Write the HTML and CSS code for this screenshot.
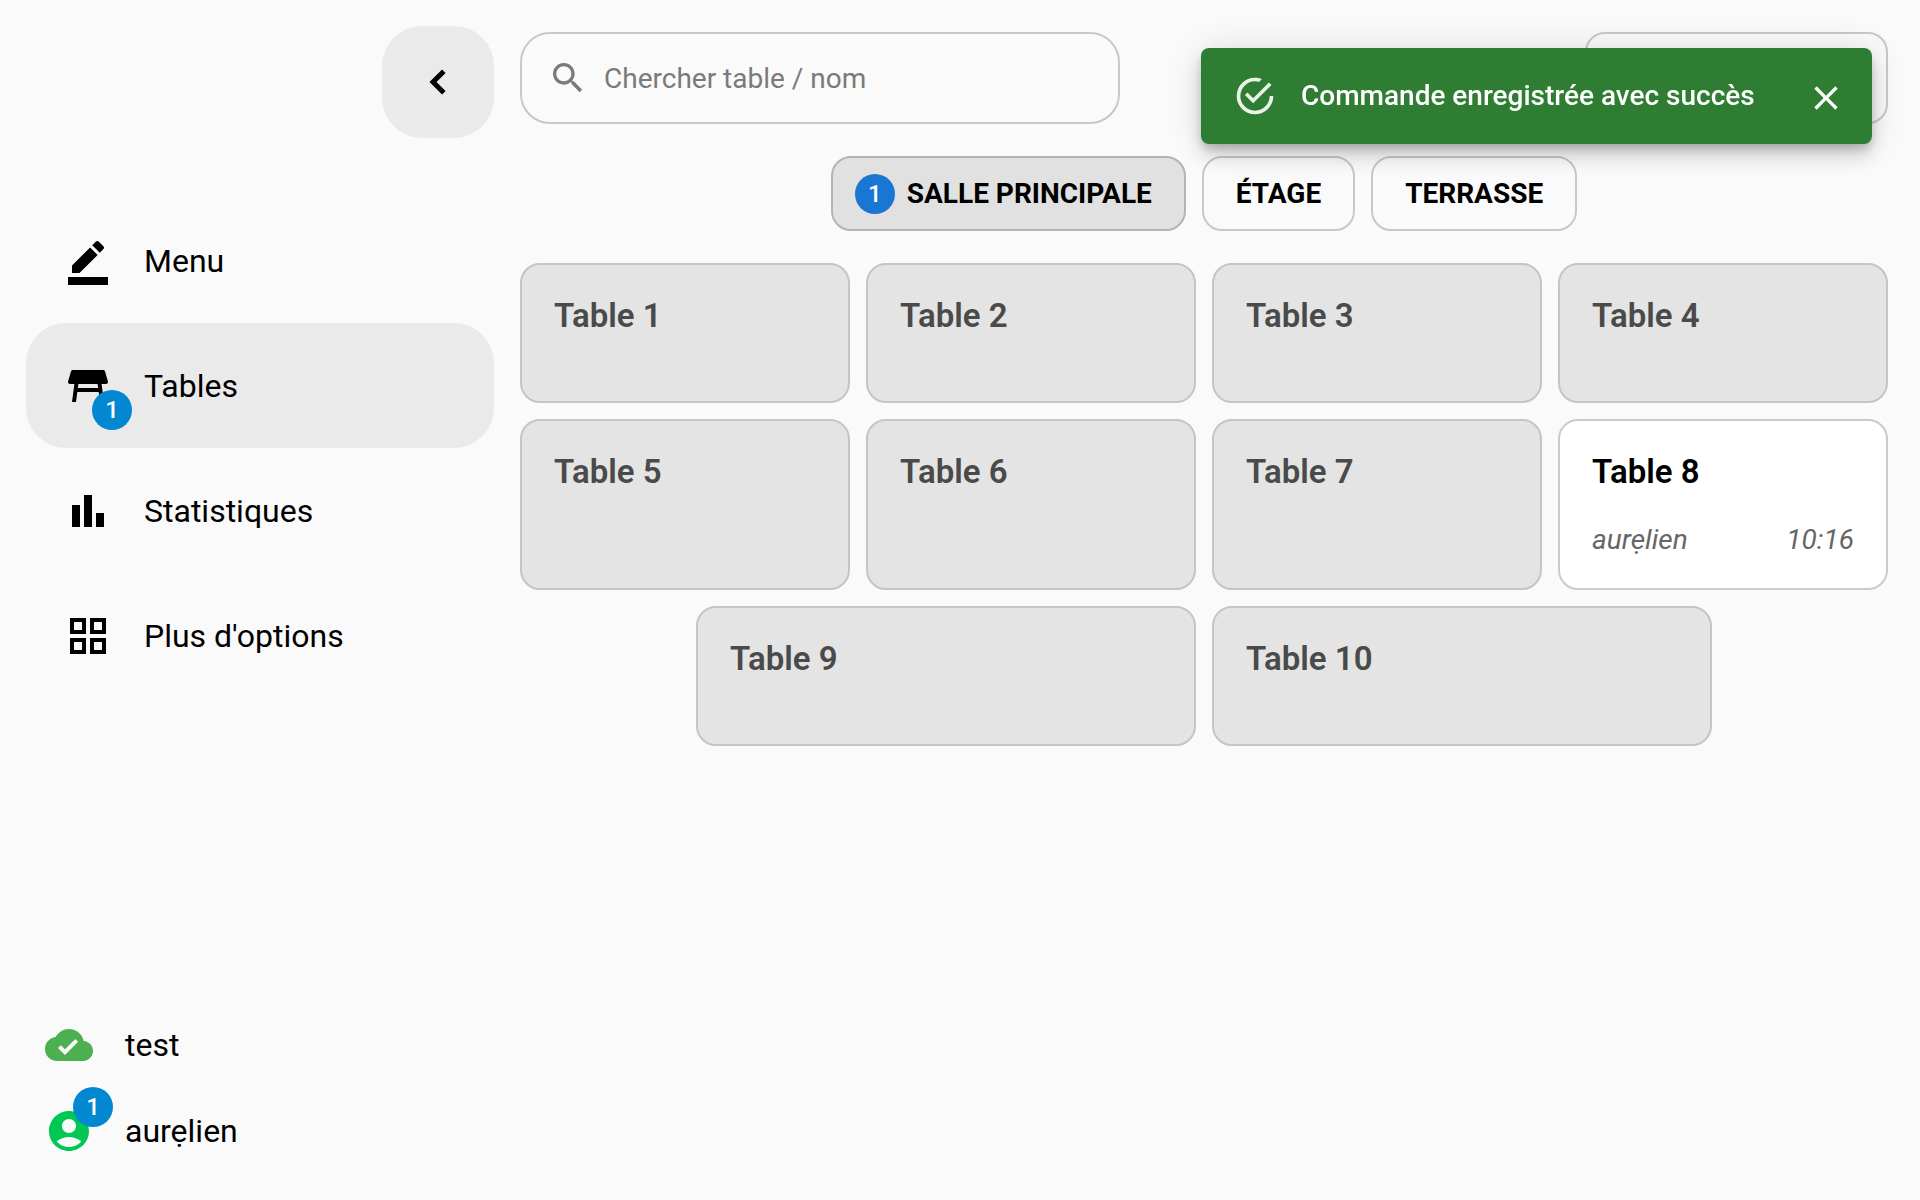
FILE: index.html
```
<!DOCTYPE html>
<html lang="fr">
<head>
  <meta charset="UTF-8">
  <meta name="viewport" content="width=device-width, initial-scale=1.0">
  <title>Tables</title>
  <link rel="stylesheet" href="styles.css">
</head>
<body>
  <div class="app">
    <!-- Sidebar -->
    <aside class="sidebar">
      <button class="collapse" type="button" aria-label="Réduire le menu">
        <svg class="icon-chevron" viewBox="0 0 24 24"><path d="M15.5 5.5 9 12l6.5 6.5" fill="none" stroke="currentColor" stroke-width="3"/></svg>
      </button>

      <nav class="nav">
        <a class="nav-item" href="#menu">
          <span class="nav-icon">
            <svg viewBox="0 0 24 24"><path d="M22 24H2v-4h20v4zM13.06 5.19l3.75 3.75L7.75 18H4v-3.75l9.06-9.06zm4.82 2.68-3.75-3.75 1.83-1.83c.39-.39 1.02-.39 1.41 0l2.34 2.34c.39.39.39 1.02 0 1.41l-1.83 1.83z"/></svg>
          </span>
          Menu
        </a>
        <a class="nav-item active" href="#tables">
          <span class="nav-icon">
            <svg viewBox="0 0 24 24"><path d="M21.96 9.73l-1.43-5c-.12-.43-.51-.73-.96-.73H4.43c-.45 0-.84.3-.96.73l-1.43 5c-.18.63.3 1.27.96 1.27h2.2L4 20h2l.67-5h10.67l.66 5h2l-1.2-9H21c.66 0 1.14-.64.96-1.27zM6.93 13l.27-2h9.6l.27 2H6.93z"/></svg>
            <span class="badge badge-bottom">1</span>
          </span>
          Tables
        </a>
        <a class="nav-item" href="#statistiques">
          <span class="nav-icon">
            <svg viewBox="0 0 24 24"><path d="M4 9h4v11H4zm12 4h4v7h-4zm-6-9h4v16h-4z"/></svg>
          </span>
          Statistiques
        </a>
        <a class="nav-item" href="#options">
          <span class="nav-icon">
            <svg viewBox="0 0 24 24"><path d="M3 3v8h8V3H3zm6 6H5V5h4v4zm-6 4v8h8v-8H3zm6 6H5v-4h4v4zm4-16v8h8V3h-8zm6 6h-4V5h4v4zm-6 4v8h8v-8h-8zm6 6h-4v-4h4v4z"/></svg>
          </span>
          Plus d'options
        </a>
      </nav>

      <div class="account">
        <a class="account-item" href="#test">
          <span class="nav-icon cloud">
            <svg viewBox="0 0 24 24"><path d="M19.35 10.04C18.67 6.59 15.64 4 12 4 9.11 4 6.6 5.64 5.35 8.04 2.34 8.36 0 10.91 0 14c0 3.31 2.69 6 6 6h13c2.76 0 5-2.24 5-5 0-2.64-2.05-4.78-4.65-4.96zM10 17l-3.5-3.5 1.41-1.41L10 14.17 15.18 9l1.41 1.41L10 17z"/></svg>
          </span>
          test
        </a>
        <a class="account-item" href="#profil">
          <span class="nav-icon user">
            <svg viewBox="0 0 24 24"><path d="M12 2C6.48 2 2 6.48 2 12s4.48 10 10 10 10-4.48 10-10S17.52 2 12 2zm0 4c1.93 0 3.5 1.57 3.5 3.5S13.93 13 12 13s-3.5-1.57-3.5-3.5S10.07 6 12 6zm0 14c-2.03 0-4.43-.82-6.14-2.88C7.55 15.8 9.68 15 12 15s4.45.8 6.14 2.12C16.43 19.18 14.03 20 12 20z"/></svg>
            <span class="badge badge-top">1</span>
          </span>
          aurẹlien
        </a>
      </div>
    </aside>

    <!-- Tables -->
    <main class="content">
      <div class="toolbar">
        <label class="search">
          <svg viewBox="0 0 24 24"><path d="M15.5 14h-.79l-.28-.27C15.41 12.59 16 11.11 16 9.5 16 5.91 13.09 3 9.5 3S3 5.91 3 9.5 5.91 16 9.5 16c1.61 0 3.09-.59 4.23-1.57l.27.28v.79l5 4.99L20.49 19l-4.99-5zm-6 0C7.01 14 5 11.99 5 9.5S7.01 5 9.5 5 14 7.01 14 9.5 11.99 14 9.5 14z"/></svg>
          <input type="text" placeholder="Chercher table / nom" aria-label="Chercher table / nom">
        </label>
        <button class="toolbar-button" type="button" aria-label="Options"></button>
      </div>

      <div class="rooms">
        <button class="room selected" type="button"><span class="badge badge-room">1</span>SALLE PRINCIPALE</button>
        <button class="room" type="button">ÉTAGE</button>
        <button class="room" type="button">TERRASSE</button>
      </div>

      <div class="tables">
        <button class="table-card" type="button"><span class="table-name">Table 1</span></button>
        <button class="table-card" type="button"><span class="table-name">Table 2</span></button>
        <button class="table-card" type="button"><span class="table-name">Table 3</span></button>
        <button class="table-card" type="button"><span class="table-name">Table 4</span></button>
        <button class="table-card" type="button"><span class="table-name">Table 5</span></button>
        <button class="table-card" type="button"><span class="table-name">Table 6</span></button>
        <button class="table-card" type="button"><span class="table-name">Table 7</span></button>
        <button class="table-card open" type="button">
          <span class="table-name">Table 8</span>
          <span class="table-info"><span>aurẹlien</span><span>10:16</span></span>
        </button>
        <button class="table-card" type="button"><span class="table-name">Table 9</span></button>
        <button class="table-card" type="button"><span class="table-name">Table 10</span></button>
      </div>
    </main>
  </div>

  <!-- Notification -->
  <div class="toast" role="alert">
    <svg class="toast-icon" viewBox="0 0 24 24"><path d="M20,12A8,8 0 0,1 12,20A8,8 0 0,1 4,12A8,8 0 0,1 12,4C12.76,4 13.5,4.11 14.2, 4.31L15.77,2.74C14.61,2.26 13.34,2 12,2A10,10 0 0,0 2,12A10,10 0 0,0 12,22A10,10 0 0, 0 22,12M7.91,10.08L6.5,11.5L11,16L21,6L19.59,4.58L11,13.17L7.91,10.08Z"/></svg>
    <span class="toast-text">Commande enregistrée avec succès</span>
    <button class="toast-close" type="button" aria-label="Fermer">
      <svg viewBox="0 0 24 24"><path d="M19 6.41L17.59 5 12 10.59 6.41 5 5 6.41 10.59 12 5 17.59 6.41 19 12 13.41 17.59 19 19 17.59 13.41 12z"/></svg>
    </button>
  </div>
</body>
</html>
```
FILE: styles.css
```
* {
  box-sizing: border-box;
}

body {
  margin: 0;
  background: #fafafa;
  color: #000;
  font-family: Roboto, sans-serif;
  font-size: 32px;
}

a {
  color: inherit;
  text-decoration: none;
}

button,
input {
  font-family: inherit;
  color: inherit;
}

button {
  cursor: pointer;
}

svg {
  display: block;
  fill: currentColor;
}

.app {
  display: flex;
  min-height: 100vh;
}

/* Sidebar */
.sidebar {
  display: flex;
  flex-direction: column;
  flex: 0 0 520px;
  padding: 26px;
}

.collapse {
  display: flex;
  align-items: center;
  justify-content: center;
  align-self: flex-end;
  width: 112px;
  height: 112px;
  padding: 0;
  border: none;
  border-radius: 40px;
  background: #eaeaea;
}

.icon-chevron {
  width: 40px;
  height: 40px;
}

.nav {
  margin-top: 60px;
}

.nav-item {
  display: flex;
  align-items: center;
  gap: 32px;
  height: 125px;
  padding: 0 38px;
  border-radius: 40px;
}

.nav-item.active {
  background: #eaeaea;
}

.nav-icon {
  position: relative;
  width: 48px;
  height: 48px;
}

.account {
  margin-top: auto;
}

.account-item {
  display: flex;
  align-items: center;
  gap: 32px;
  height: 86px;
  padding: 0 19px;
}

.cloud {
  color: #4caf50;
}

.user {
  color: #00c853;
}

/* Count badges */
.badge {
  display: flex;
  align-items: center;
  justify-content: center;
  width: 40px;
  height: 40px;
  border-radius: 50%;
  background: #0288d1;
  color: #fff;
  font-size: 24px;
  font-weight: 500;
}

.badge-bottom {
  position: absolute;
  right: -20px;
  bottom: -20px;
}

.badge-top {
  position: absolute;
  right: -20px;
  top: -20px;
}

.badge-room {
  background: #1976d2;
}

/* Search bar */
.content {
  flex: 1;
  min-width: 0;
  padding: 32px 32px 32px 0;
}

.toolbar {
  display: flex;
  justify-content: space-between;
}

.search {
  display: flex;
  align-items: center;
  gap: 16px;
  width: 600px;
  height: 92px;
  padding: 0 26px;
  border: 2px solid #c8c8c8;
  border-radius: 30px;
  color: #7a7a7a;
}

.search svg {
  flex: none;
  width: 40px;
  height: 40px;
}

.search input {
  flex: 1;
  min-width: 0;
  padding: 0;
  border: none;
  outline: none;
  background: none;
  color: #000;
  font-size: 28px;
}

.search input::placeholder {
  color: #7a7a7a;
}

.toolbar-button {
  width: 303px;
  height: 92px;
  border: 2px solid #c8c8c8;
  border-radius: 20px;
  background: none;
}

/* Rooms */
.rooms {
  display: flex;
  justify-content: center;
  gap: 16px;
  margin: 32px 0;
}

.room {
  display: flex;
  align-items: center;
  gap: 12px;
  height: 75px;
  padding: 0 32px;
  border: 2px solid #c8c8c8;
  border-radius: 20px;
  background: none;
  font-size: 28px;
  font-weight: 700;
}

.room.selected {
  padding-left: 22px;
  border-color: #b4b4b4;
  background: #e1e1e1;
}

/* Table cards */
.tables {
  display: flex;
  flex-wrap: wrap;
  justify-content: center;
  gap: 16px;
}

.table-card {
  display: flex;
  flex-direction: column;
  flex: 1 1 300px;
  gap: 32px;
  max-width: 500px;
  min-height: 140px;
  padding: 32px;
  border: 2px solid #c5c5c5;
  border-radius: 20px;
  background: #e4e4e4;
  color: #4a4a4a;
  text-align: left;
}

.table-card.open {
  border-color: #cbcbcb;
  background: #fff;
  color: #000;
}

.table-name {
  font-size: 33px;
  font-weight: 600;
  line-height: 38px;
}

.table-info {
  display: flex;
  justify-content: space-between;
  align-self: stretch;
  color: #666;
  font-size: 28px;
  font-style: italic;
  line-height: 33px;
}

/* Notification */
.toast {
  position: fixed;
  top: 48px;
  right: 48px;
  display: flex;
  align-items: center;
  min-width: 671px;
  height: 96px;
  padding: 0 26px 0 32px;
  border-radius: 8px;
  background: #2e7d32;
  color: #fff;
  box-shadow: 0 6px 10px -2px rgba(0, 0, 0, 0.2), 0 12px 20px rgba(0, 0, 0, 0.14), 0 2px 36px rgba(0, 0, 0, 0.12);
}

.toast-icon {
  width: 44px;
  height: 44px;
  opacity: 0.9;
}

.toast-text {
  margin: 0 auto 0 24px;
  font-size: 28px;
  font-weight: 500;
  line-height: 40px;
}

.toast-close {
  padding: 4px 0 0;
  border: none;
  background: none;
}

.toast-close svg {
  width: 40px;
  height: 40px;
}
```
